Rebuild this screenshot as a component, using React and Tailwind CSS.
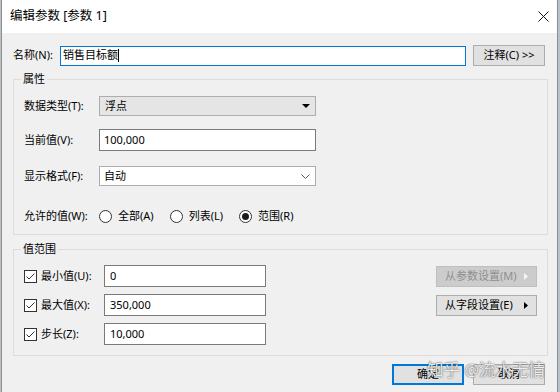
import React from 'react';

const Radio = ({ checked, label }) => (
  <div className="flex items-center gap-[6px]">
    <span className="w-[13px] h-[13px] rounded-full border border-[#333333] bg-white flex items-center justify-center">
      {checked && <span className="w-[7px] h-[7px] rounded-full bg-[#1a1a1a]" />}
    </span>
    <span>{label}</span>
  </div>
);

const CheckBox = () => (
  <span className="w-[13px] h-[13px] border border-[#333333] bg-white flex items-center justify-center">
    <svg width="11" height="11" viewBox="0 0 11 11">
      <path d="M1.5 5.5 L4 8 L9.5 2.5" fill="none" stroke="#333333" strokeWidth="1" />
    </svg>
  </span>
);

const Arrow = ({ color }) => (
  <svg width="4" height="7" viewBox="0 0 4 7">
    <path d="M0 0 L4 3.5 L0 7 Z" fill={color} />
  </svg>
);

const RangeRow = ({ label, value }) => (
  <div className="flex items-center h-[22px]">
    <CheckBox />
    <span className="ml-[4px] w-[63px]">{label}</span>
    <div className="w-[162px] h-[22px] border border-[#7a7a7a] bg-white flex items-center px-[5px]">{value}</div>
  </div>
);

const App = () => {
  return (
    <div className="w-[560px] h-[392px] overflow-hidden bg-[#b9c1c9] font-['Noto_Sans','Noto_Sans_CJK_SC',sans-serif] text-[11px] text-black">
      <div className="relative ml-[1px] w-[557px] h-[392px] border-x border-[#8e8e8e] bg-[#f0f0f0] flex flex-col">
        {/* title bar */}
        <div className="h-[33px] bg-white flex items-center justify-between pl-[8px] pr-[8px]">
          <span className="text-[12.5px]">编辑参数 [参数 1]</span>
          <svg width="11" height="11" viewBox="0 0 11 11">
            <path d="M0.5 0.5 L10.5 10.5 M10.5 0.5 L0.5 10.5" stroke="#111111" strokeWidth="1" />
          </svg>
        </div>

        <div className="pl-[11px] pt-[12px] flex flex-col">
          {/* name row */}
          <div className="flex items-center h-[21px]">
            <span className="w-[47px]">名称(N):</span>
            <div className="w-[406px] h-[20px] border border-[#0078d7] bg-white flex items-center px-[2px]">
              <span>销售目标额</span>
              <span className="w-[1px] h-[13px] bg-black" />
            </div>
            <button className="ml-[7px] w-[72px] h-[21px] border border-[#adadad] bg-[#e1e1e1] flex items-center justify-center">
              注释(C) &gt;&gt;
            </button>
          </div>

          {/* 属性 */}
          <fieldset className="mt-[5px] w-[535px] border border-[#dcdcdc]">
            <legend className="ml-[7px] px-[2px] leading-[16px]">属性</legend>
            <div className="pt-[9px] pb-[11px] pl-[10px] flex flex-col">
              <div className="flex items-center h-[20px]">
                <span className="w-[75px]">数据类型(T):</span>
                <div className="w-[217px] h-[20px] border border-[#adadad] bg-[#e5e5e5] flex items-center justify-between pl-[5px] pr-[5px]">
                  <span>浮点</span>
                  <svg width="8" height="4" viewBox="0 0 8 4">
                    <path d="M0 0 L8 0 L4 4 Z" fill="#000000" />
                  </svg>
                </div>
              </div>
              <div className="mt-[13px] flex items-center h-[22px]">
                <span className="w-[75px]">当前值(V):</span>
                <div className="w-[217px] h-[22px] border border-[#7a7a7a] bg-white flex items-center px-[4px]">100,000</div>
              </div>
              <div className="mt-[15px] flex items-center h-[20px]">
                <span className="w-[75px]">显示格式(F):</span>
                <div className="w-[217px] h-[20px] border border-[#adadad] bg-white flex items-center justify-between pl-[4px] pr-[5px]">
                  <span>自动</span>
                  <svg width="9" height="5" viewBox="0 0 9 5">
                    <path d="M0.5 0.5 L4.5 4.5 L8.5 0.5" fill="none" stroke="#555555" strokeWidth="1" />
                  </svg>
                </div>
              </div>
              <div className="mt-[23px] flex items-center h-[14px]">
                <span className="w-[75px]">允许的值(W):</span>
                <div className="flex items-center gap-[16px]">
                  <Radio label="全部(A)" />
                  <Radio label="列表(L)" />
                  <Radio label="范围(R)" checked />
                </div>
              </div>
            </div>
          </fieldset>

          {/* 值范围 */}
          <fieldset className="mt-[6px] w-[535px] border border-[#dcdcdc]">
            <legend className="ml-[7px] px-[2px] leading-[16px]">值范围</legend>
            <div className="pt-[8px] pb-[10px] pl-[10px] pr-[10px] flex">
              <div className="flex flex-col gap-[7px]">
                <RangeRow label="最小值(U):" value="0" />
                <RangeRow label="最大值(X):" value="350,000" />
                <RangeRow label="步长(Z):" value="10,000" />
              </div>
              <div className="ml-auto pt-[1px] flex flex-col gap-[8px]">
                <div className="w-[101px] h-[21px] border border-[#bfbfbf] bg-[#cccccc] text-[#8f8f8f] flex items-center justify-between px-[8px]">
                  <span>从参数设置(M)</span>
                  <Arrow color="#f4f4f4" />
                </div>
                <button className="w-[101px] h-[21px] border border-[#adadad] bg-[#e1e1e1] flex items-center justify-between px-[8px]">
                  <span>从字段设置(E)</span>
                  <Arrow color="#000000" />
                </button>
              </div>
            </div>
          </fieldset>

          {/* dialog buttons */}
          <div className="mt-[8px] w-[532px] flex justify-end gap-[9px]">
            <button className="w-[72px] h-[21px] border-2 border-[#0078d7] bg-[#e1e1e1] flex items-center justify-center">确定</button>
            <button className="w-[72px] h-[21px] border border-[#adadad] bg-[#e1e1e1] flex items-center justify-center">取消</button>
          </div>
        </div>

        {/* watermark overlay */}
        <div className="absolute left-[425px] top-[358px] text-[16.5px] leading-[24px] text-white/90 [text-shadow:0_0_1px_rgba(0,0,0,0.7),0_0_2px_rgba(0,0,0,0.35)] whitespace-nowrap">
          知乎 @流水无情
        </div>
      </div>
    </div>
  );
};

export default App;
